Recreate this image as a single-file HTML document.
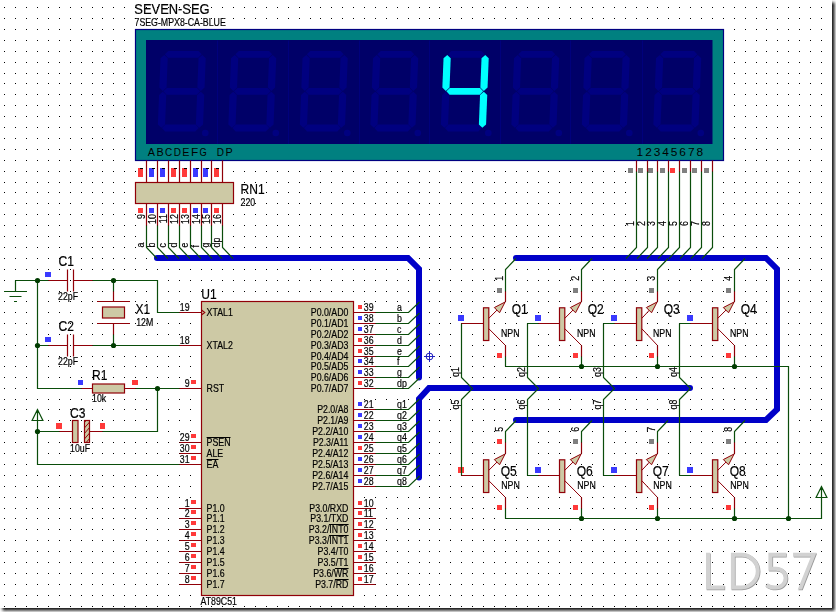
<!DOCTYPE html>
<html><head><meta charset="utf-8"><title>LD57 schematic</title>
<style>
html,body{margin:0;padding:0;background:#fff;}
body{width:836px;height:612px;overflow:hidden;position:relative;font-family:"Liberation Sans",sans-serif;}
#sheet{position:absolute;left:0;top:0;width:832px;height:608px;background:#fff;box-shadow:2px 2px 3px 0.5px rgba(0,0,0,0.95);}
svg{display:block;}
text{white-space:pre;}
</style></head><body>
<div id="sheet">
<svg width="832" height="608" viewBox="0 0 832 608" font-family="'Liberation Sans', sans-serif" fill="#000">
<defs><path id="r" d="M4 0h1v1h-1zM15 0h1v1h-1zM26 0h1v1h-1zM37 0h1v1h-1zM48 0h1v1h-1zM59 0h1v1h-1zM70 0h1v1h-1zM81 0h1v1h-1zM92 0h1v1h-1zM102 0h1v1h-1zM113 0h1v1h-1zM124 0h1v1h-1zM135 0h1v1h-1zM146 0h1v1h-1zM157 0h1v1h-1zM168 0h1v1h-1zM179 0h1v1h-1zM190 0h1v1h-1zM201 0h1v1h-1zM211 0h1v1h-1zM222 0h1v1h-1zM233 0h1v1h-1zM244 0h1v1h-1zM255 0h1v1h-1zM266 0h1v1h-1zM277 0h1v1h-1zM288 0h1v1h-1zM299 0h1v1h-1zM310 0h1v1h-1zM320 0h1v1h-1zM331 0h1v1h-1zM342 0h1v1h-1zM353 0h1v1h-1zM364 0h1v1h-1zM375 0h1v1h-1zM386 0h1v1h-1zM397 0h1v1h-1zM408 0h1v1h-1zM419 0h1v1h-1zM429 0h1v1h-1zM439 0h1v1h-1zM450 0h1v1h-1zM461 0h1v1h-1zM472 0h1v1h-1zM483 0h1v1h-1zM494 0h1v1h-1zM505 0h1v1h-1zM516 0h1v1h-1zM527 0h1v1h-1zM538 0h1v1h-1zM548 0h1v1h-1zM559 0h1v1h-1zM570 0h1v1h-1zM581 0h1v1h-1zM592 0h1v1h-1zM603 0h1v1h-1zM614 0h1v1h-1zM625 0h1v1h-1zM636 0h1v1h-1zM647 0h1v1h-1zM657 0h1v1h-1zM668 0h1v1h-1zM679 0h1v1h-1zM690 0h1v1h-1zM701 0h1v1h-1zM712 0h1v1h-1zM723 0h1v1h-1zM734 0h1v1h-1zM745 0h1v1h-1zM756 0h1v1h-1zM766 0h1v1h-1zM777 0h1v1h-1zM788 0h1v1h-1zM799 0h1v1h-1zM810 0h1v1h-1zM821 0h1v1h-1z"/></defs>
<g fill="#000" shape-rendering="crispEdges">
<use href="#r" y="7"/>
<use href="#r" y="18"/>
<use href="#r" y="29"/>
<use href="#r" y="40"/>
<use href="#r" y="51"/>
<use href="#r" y="62"/>
<use href="#r" y="73"/>
<use href="#r" y="83"/>
<use href="#r" y="94"/>
<use href="#r" y="105"/>
<use href="#r" y="116"/>
<use href="#r" y="127"/>
<use href="#r" y="138"/>
<use href="#r" y="149"/>
<use href="#r" y="160"/>
<use href="#r" y="171"/>
<use href="#r" y="182"/>
<use href="#r" y="192"/>
<use href="#r" y="203"/>
<use href="#r" y="214"/>
<use href="#r" y="225"/>
<use href="#r" y="236"/>
<use href="#r" y="247"/>
<use href="#r" y="258"/>
<use href="#r" y="269"/>
<use href="#r" y="280"/>
<use href="#r" y="291"/>
<use href="#r" y="301"/>
<use href="#r" y="312"/>
<use href="#r" y="323"/>
<use href="#r" y="334"/>
<use href="#r" y="345"/>
<use href="#r" y="356"/>
<use href="#r" y="366"/>
<use href="#r" y="377"/>
<use href="#r" y="388"/>
<use href="#r" y="399"/>
<use href="#r" y="409"/>
<use href="#r" y="420"/>
<use href="#r" y="431"/>
<use href="#r" y="442"/>
<use href="#r" y="453"/>
<use href="#r" y="464"/>
<use href="#r" y="475"/>
<use href="#r" y="486"/>
<use href="#r" y="497"/>
<use href="#r" y="508"/>
<use href="#r" y="518"/>
<use href="#r" y="529"/>
<use href="#r" y="540"/>
<use href="#r" y="551"/>
<use href="#r" y="562"/>
<use href="#r" y="573"/>
<use href="#r" y="584"/>
<use href="#r" y="595"/>
<use href="#r" y="606"/>
</g>
<g fill="none" stroke-width="4" stroke-linejoin="miter" stroke-linecap="butt"><path d="M708 552.7V587.6H724.5M732.9 554.7H741.4A16.4 16.4 0 0 1 741.4 587.5H732.9ZM786 554.7H770.4V568.7H776C782.5 568.7 785.6 573.4 785.6 578C785.6 583.6 781.4 587.6 775.2 587.6C771.6 587.6 768.6 586.6 766.4 584.7" stroke="#9a9a9a" transform="translate(0.7 0.7)"/><polygon points="793.1,552.7 816.4,552.7 802,589.5 797.7,589.5 810.9,556.7 793.1,556.7" fill="#9a9a9a" transform="translate(0.7 0.7)"/><path d="M708 552.7V587.6H724.5M732.9 554.7H741.4A16.4 16.4 0 0 1 741.4 587.5H732.9ZM786 554.7H770.4V568.7H776C782.5 568.7 785.6 573.4 785.6 578C785.6 583.6 781.4 587.6 775.2 587.6C771.6 587.6 768.6 586.6 766.4 584.7" stroke="#d2d2d2"/><polygon points="793.1,552.7 816.4,552.7 802,589.5 797.7,589.5 810.9,556.7 793.1,556.7" fill="#d2d2d2"/></g>
<g><rect x="135.5" y="29.5" width="588" height="131" fill="#008080" stroke="#000080" stroke-width="1.2"/><rect x="146" y="40" width="566.5" height="104" fill="#000068"/><rect x="217" y="40.5" width="1" height="103.5" fill="#00007c"/><rect x="288" y="40.5" width="1" height="103.5" fill="#00007c"/><rect x="359" y="40.5" width="1" height="103.5" fill="#00007c"/><rect x="429" y="40.5" width="1" height="103.5" fill="#00007c"/><rect x="500" y="40.5" width="1" height="103.5" fill="#00007c"/><rect x="570" y="40.5" width="1" height="103.5" fill="#00007c"/><rect x="642" y="40.5" width="1" height="103.5" fill="#00007c"/><polygon points="164.88,54.3 168.32,50.9 198.52,50.9 201.68,54.3 198.24,57.7 168.04,57.7" fill="#000080"/><polygon points="161.93,128 165.37,124.6 195.57,124.6 198.73,128 195.3,131.4 165.1,131.4" fill="#000080"/><polygon points="162.78,91.7 166.25,95 165.07,124.5 161.34,127.8 157.87,124.5 159.05,95" fill="#000080"/><polygon points="164.26,54.9 167.72,58.2 166.55,87.6 162.82,90.9 159.35,87.6 160.52,58.2" fill="#000080"/><polygon points="202.26,54.9 205.72,58.2 204.55,87.6 200.82,90.9 197.35,87.6 198.52,58.2" fill="#000080"/><polygon points="200.78,91.7 204.25,95 203.07,124.5 199.34,127.8 195.87,124.5 197.05,95" fill="#000080"/><polygon points="163.4,91.3 166.84,87.9 197.04,87.9 200.2,91.3 196.76,94.7 166.56,94.7" fill="#000080"/><circle cx="205.3" cy="133" r="3.3" fill="#000080"/><polygon points="235.38,54.3 238.82,50.9 269.02,50.9 272.18,54.3 268.74,57.7 238.54,57.7" fill="#000080"/><polygon points="232.43,128 235.87,124.6 266.07,124.6 269.23,128 265.8,131.4 235.6,131.4" fill="#000080"/><polygon points="233.28,91.7 236.75,95 235.57,124.5 231.84,127.8 228.37,124.5 229.55,95" fill="#000080"/><polygon points="234.76,54.9 238.22,58.2 237.05,87.6 233.32,90.9 229.85,87.6 231.02,58.2" fill="#000080"/><polygon points="272.76,54.9 276.22,58.2 275.05,87.6 271.32,90.9 267.85,87.6 269.02,58.2" fill="#000080"/><polygon points="271.28,91.7 274.75,95 273.57,124.5 269.84,127.8 266.37,124.5 267.55,95" fill="#000080"/><polygon points="233.9,91.3 237.34,87.9 267.54,87.9 270.7,91.3 267.26,94.7 237.06,94.7" fill="#000080"/><circle cx="275.8" cy="133" r="3.3" fill="#000080"/><polygon points="306.88,54.3 310.32,50.9 340.52,50.9 343.68,54.3 340.24,57.7 310.04,57.7" fill="#000080"/><polygon points="303.93,128 307.37,124.6 337.57,124.6 340.73,128 337.3,131.4 307.1,131.4" fill="#000080"/><polygon points="304.78,91.7 308.25,95 307.07,124.5 303.34,127.8 299.87,124.5 301.05,95" fill="#000080"/><polygon points="306.26,54.9 309.72,58.2 308.55,87.6 304.82,90.9 301.35,87.6 302.52,58.2" fill="#000080"/><polygon points="344.26,54.9 347.72,58.2 346.55,87.6 342.82,90.9 339.35,87.6 340.52,58.2" fill="#000080"/><polygon points="342.78,91.7 346.25,95 345.07,124.5 341.34,127.8 337.87,124.5 339.05,95" fill="#000080"/><polygon points="305.4,91.3 308.84,87.9 339.04,87.9 342.2,91.3 338.76,94.7 308.56,94.7" fill="#000080"/><circle cx="347.3" cy="133" r="3.3" fill="#000080"/><polygon points="377.38,54.3 380.82,50.9 411.02,50.9 414.18,54.3 410.74,57.7 380.54,57.7" fill="#000080"/><polygon points="374.43,128 377.87,124.6 408.07,124.6 411.23,128 407.8,131.4 377.6,131.4" fill="#000080"/><polygon points="375.28,91.7 378.75,95 377.57,124.5 373.84,127.8 370.37,124.5 371.55,95" fill="#000080"/><polygon points="376.76,54.9 380.22,58.2 379.05,87.6 375.32,90.9 371.85,87.6 373.02,58.2" fill="#000080"/><polygon points="414.76,54.9 418.22,58.2 417.05,87.6 413.32,90.9 409.85,87.6 411.02,58.2" fill="#000080"/><polygon points="413.28,91.7 416.75,95 415.57,124.5 411.84,127.8 408.37,124.5 409.55,95" fill="#000080"/><polygon points="375.9,91.3 379.34,87.9 409.54,87.9 412.7,91.3 409.26,94.7 379.06,94.7" fill="#000080"/><circle cx="417.8" cy="133" r="3.3" fill="#000080"/><polygon points="447.88,54.3 451.32,50.9 481.52,50.9 484.68,54.3 481.24,57.7 451.04,57.7" fill="#000080"/><polygon points="444.93,128 448.37,124.6 478.57,124.6 481.73,128 478.3,131.4 448.1,131.4" fill="#000080"/><polygon points="445.78,91.7 449.25,95 448.07,124.5 444.34,127.8 440.87,124.5 442.05,95" fill="#000080"/><polygon points="447.26,54.9 450.72,58.2 449.55,87.6 445.82,90.9 442.35,87.6 443.52,58.2" fill="#00ffff"/><polygon points="485.26,54.9 488.72,58.2 487.55,87.6 483.82,90.9 480.35,87.6 481.52,58.2" fill="#00ffff"/><polygon points="483.78,91.7 487.25,95 486.07,124.5 482.34,127.8 478.87,124.5 480.05,95" fill="#00ffff"/><polygon points="446.4,91.3 449.84,87.9 480.04,87.9 483.2,91.3 479.76,94.7 449.56,94.7" fill="#00ffff"/><circle cx="488.3" cy="133" r="3.3" fill="#000080"/><polygon points="518.38,54.3 521.82,50.9 552.02,50.9 555.18,54.3 551.74,57.7 521.54,57.7" fill="#000080"/><polygon points="515.43,128 518.87,124.6 549.07,124.6 552.23,128 548.8,131.4 518.6,131.4" fill="#000080"/><polygon points="516.28,91.7 519.75,95 518.57,124.5 514.84,127.8 511.37,124.5 512.55,95" fill="#000080"/><polygon points="517.76,54.9 521.22,58.2 520.05,87.6 516.32,90.9 512.85,87.6 514.02,58.2" fill="#000080"/><polygon points="555.76,54.9 559.22,58.2 558.05,87.6 554.32,90.9 550.85,87.6 552.02,58.2" fill="#000080"/><polygon points="554.28,91.7 557.75,95 556.57,124.5 552.84,127.8 549.37,124.5 550.55,95" fill="#000080"/><polygon points="516.9,91.3 520.34,87.9 550.54,87.9 553.7,91.3 550.26,94.7 520.06,94.7" fill="#000080"/><circle cx="558.8" cy="133" r="3.3" fill="#000080"/><polygon points="588.88,54.3 592.32,50.9 622.52,50.9 625.68,54.3 622.24,57.7 592.04,57.7" fill="#000080"/><polygon points="585.93,128 589.37,124.6 619.57,124.6 622.73,128 619.3,131.4 589.1,131.4" fill="#000080"/><polygon points="586.78,91.7 590.25,95 589.07,124.5 585.34,127.8 581.87,124.5 583.05,95" fill="#000080"/><polygon points="588.26,54.9 591.72,58.2 590.55,87.6 586.82,90.9 583.35,87.6 584.52,58.2" fill="#000080"/><polygon points="626.26,54.9 629.72,58.2 628.55,87.6 624.82,90.9 621.35,87.6 622.52,58.2" fill="#000080"/><polygon points="624.78,91.7 628.25,95 627.07,124.5 623.34,127.8 619.87,124.5 621.05,95" fill="#000080"/><polygon points="587.4,91.3 590.84,87.9 621.04,87.9 624.2,91.3 620.76,94.7 590.56,94.7" fill="#000080"/><circle cx="629.3" cy="133" r="3.3" fill="#000080"/><polygon points="660.38,54.3 663.82,50.9 694.02,50.9 697.18,54.3 693.74,57.7 663.54,57.7" fill="#000080"/><polygon points="657.43,128 660.87,124.6 691.07,124.6 694.23,128 690.8,131.4 660.6,131.4" fill="#000080"/><polygon points="658.28,91.7 661.75,95 660.57,124.5 656.84,127.8 653.37,124.5 654.55,95" fill="#000080"/><polygon points="659.76,54.9 663.22,58.2 662.05,87.6 658.32,90.9 654.85,87.6 656.02,58.2" fill="#000080"/><polygon points="697.76,54.9 701.22,58.2 700.05,87.6 696.32,90.9 692.85,87.6 694.02,58.2" fill="#000080"/><polygon points="696.28,91.7 699.75,95 698.57,124.5 694.84,127.8 691.37,124.5 692.55,95" fill="#000080"/><polygon points="658.9,91.3 662.34,87.9 692.54,87.9 695.7,91.3 692.26,94.7 662.06,94.7" fill="#000080"/><circle cx="700.8" cy="133" r="3.3" fill="#000080"/><text x="147.8" y="156" font-size="10" textLength="7.2" lengthAdjust="spacingAndGlyphs">A</text><text x="156.43" y="156" font-size="10" textLength="7.2" lengthAdjust="spacingAndGlyphs">B</text><text x="165.06" y="156" font-size="10" textLength="7.2" lengthAdjust="spacingAndGlyphs">C</text><text x="173.69" y="156" font-size="10" textLength="7.2" lengthAdjust="spacingAndGlyphs">D</text><text x="182.32" y="156" font-size="10" textLength="7.2" lengthAdjust="spacingAndGlyphs">E</text><text x="190.95" y="156" font-size="10" textLength="7.2" lengthAdjust="spacingAndGlyphs">F</text><text x="199.58" y="156" font-size="10" textLength="7.2" lengthAdjust="spacingAndGlyphs">G</text><text x="216.84" y="156" font-size="10" textLength="7.2" lengthAdjust="spacingAndGlyphs">D</text><text x="225.47" y="156" font-size="10" textLength="7.2" lengthAdjust="spacingAndGlyphs">P</text><text x="636.6" y="156" font-size="10" textLength="6.6" lengthAdjust="spacingAndGlyphs">1</text><text x="645.15" y="156" font-size="10" textLength="6.6" lengthAdjust="spacingAndGlyphs">2</text><text x="653.7" y="156" font-size="10" textLength="6.6" lengthAdjust="spacingAndGlyphs">3</text><text x="662.25" y="156" font-size="10" textLength="6.6" lengthAdjust="spacingAndGlyphs">4</text><text x="670.8" y="156" font-size="10" textLength="6.6" lengthAdjust="spacingAndGlyphs">5</text><text x="679.35" y="156" font-size="10" textLength="6.6" lengthAdjust="spacingAndGlyphs">6</text><text x="687.9" y="156" font-size="10" textLength="6.6" lengthAdjust="spacingAndGlyphs">7</text><text x="696.45" y="156" font-size="10" textLength="6.6" lengthAdjust="spacingAndGlyphs">8</text></g>
<g fill="#cdc9a5" stroke="#900008" stroke-width="1.2"><rect x="135.5" y="182.5" width="98" height="21"/><rect x="201.5" y="301.5" width="152" height="294"/><rect x="102.5" y="307" width="22" height="11"/><rect x="92.5" y="384" width="32" height="9"/><rect x="72.5" y="420.5" width="5.5" height="22"/><rect x="483.5" y="307.8" width="5.3" height="32.7"/><rect x="483.5" y="459.8" width="5.3" height="32.7"/><rect x="559.5" y="307.8" width="5.3" height="32.7"/><rect x="559.5" y="459.8" width="5.3" height="32.7"/><rect x="636.5" y="307.8" width="5.3" height="32.7"/><rect x="636.5" y="459.8" width="5.3" height="32.7"/><rect x="712.5" y="307.8" width="5.3" height="32.7"/><rect x="712.5" y="459.8" width="5.3" height="32.7"/></g>
<clipPath id="hc"><rect x="84.5" y="420.5" width="5" height="22"/></clipPath>
<rect x="84.5" y="420.5" width="5" height="22" fill="#cdc9a5"/>
<path d="M83.5 423.5L90.5 415.5M83.5 429L90.5 421M83.5 434.5L90.5 426.5M83.5 440L90.5 432M83.5 445.5L90.5 437.5" stroke="#900008" stroke-width="1" fill="none" clip-path="url(#hc)"/>
<rect x="84.5" y="420.5" width="5" height="22" fill="none" stroke="#900008" stroke-width="1.2"/>
<g shape-rendering="crispEdges"><rect x="138" y="168" width="5" height="9" fill="#ff3a3a"/><rect x="140" y="167.5" width="3" height="1" fill="#000"/><rect x="138" y="208" width="5" height="5" fill="#ff3a3a"/><rect x="149" y="168" width="5" height="9" fill="#3a3aff"/><rect x="152" y="167.5" width="3" height="1" fill="#000"/><rect x="149" y="208" width="5" height="5" fill="#3a3aff"/><rect x="160" y="168" width="5" height="9" fill="#3a3aff"/><rect x="162" y="167.5" width="3" height="1" fill="#000"/><rect x="160" y="208" width="5" height="5" fill="#3a3aff"/><rect x="171" y="168" width="5" height="9" fill="#ff3a3a"/><rect x="174" y="167.5" width="3" height="1" fill="#000"/><rect x="171" y="208" width="5" height="5" fill="#ff3a3a"/><rect x="182" y="168" width="5" height="9" fill="#ff3a3a"/><rect x="184" y="167.5" width="3" height="1" fill="#000"/><rect x="182" y="208" width="5" height="5" fill="#ff3a3a"/><rect x="193" y="168" width="5" height="9" fill="#3a3aff"/><rect x="196" y="167.5" width="3" height="1" fill="#000"/><rect x="193" y="208" width="5" height="5" fill="#3a3aff"/><rect x="203" y="168" width="5" height="9" fill="#3a3aff"/><rect x="206" y="167.5" width="3" height="1" fill="#000"/><rect x="203" y="208" width="5" height="5" fill="#3a3aff"/><rect x="214" y="168" width="5" height="9" fill="#ff3a3a"/><rect x="216" y="167.5" width="3" height="1" fill="#000"/><rect x="214" y="208" width="5" height="5" fill="#ff3a3a"/><rect x="628" y="168" width="5" height="5" fill="#808080"/><rect x="638" y="168" width="5" height="5" fill="#808080"/><rect x="648" y="168" width="5" height="5" fill="#808080"/><rect x="660" y="168" width="5" height="5" fill="#808080"/><rect x="670" y="168" width="5" height="5" fill="#ff3a3a"/><rect x="682" y="168" width="5" height="5" fill="#808080"/><rect x="692" y="168" width="5" height="5" fill="#808080"/><rect x="704" y="168" width="5" height="5" fill="#808080"/><rect x="191" y="380" width="5" height="4" fill="#ff3a3a"/><rect x="191" y="434" width="5" height="4" fill="#ff3a3a"/><rect x="191" y="445" width="5" height="4" fill="#ff3a3a"/><rect x="191" y="456" width="5" height="4" fill="#ff3a3a"/><rect x="191" y="500" width="5" height="4" fill="#ff3a3a"/><rect x="191" y="510" width="5" height="4" fill="#ff3a3a"/><rect x="191" y="521" width="5" height="4" fill="#ff3a3a"/><rect x="191" y="532" width="5" height="4" fill="#ff3a3a"/><rect x="191" y="543" width="5" height="4" fill="#ff3a3a"/><rect x="191" y="554" width="5" height="4" fill="#ff3a3a"/><rect x="191" y="565" width="5" height="4" fill="#ff3a3a"/><rect x="191" y="576" width="5" height="4" fill="#ff3a3a"/><rect x="358" y="305" width="4" height="4" fill="#ff3a3a"/><rect x="358" y="402" width="4" height="4" fill="#3a3aff"/><rect x="358" y="501" width="4" height="4" fill="#ff3a3a"/><rect x="358" y="316" width="4" height="4" fill="#3a3aff"/><rect x="358" y="413" width="4" height="4" fill="#3a3aff"/><rect x="358" y="511" width="4" height="4" fill="#ff3a3a"/><rect x="358" y="327" width="4" height="4" fill="#3a3aff"/><rect x="358" y="424" width="4" height="4" fill="#3a3aff"/><rect x="358" y="522" width="4" height="4" fill="#ff3a3a"/><rect x="358" y="338" width="4" height="4" fill="#ff3a3a"/><rect x="358" y="435" width="4" height="4" fill="#3a3aff"/><rect x="358" y="533" width="4" height="4" fill="#ff3a3a"/><rect x="358" y="349" width="4" height="4" fill="#ff3a3a"/><rect x="358" y="446" width="4" height="4" fill="#ff3a3a"/><rect x="358" y="544" width="4" height="4" fill="#ff3a3a"/><rect x="358" y="359" width="4" height="4" fill="#3a3aff"/><rect x="358" y="457" width="4" height="4" fill="#3a3aff"/><rect x="358" y="555" width="4" height="4" fill="#ff3a3a"/><rect x="358" y="370" width="4" height="4" fill="#3a3aff"/><rect x="358" y="468" width="4" height="4" fill="#3a3aff"/><rect x="358" y="566" width="4" height="4" fill="#ff3a3a"/><rect x="358" y="381" width="4" height="4" fill="#ff3a3a"/><rect x="358" y="479" width="4" height="4" fill="#3a3aff"/><rect x="358" y="577" width="4" height="4" fill="#ff3a3a"/><rect x="45" y="272" width="6" height="5" fill="#3a3aff"/><rect x="45" y="337" width="6" height="5" fill="#3a3aff"/><rect x="78" y="380" width="5" height="5" fill="#3a3aff"/><rect x="132" y="380" width="6" height="5" fill="#ff3a3a"/><rect x="56" y="423" width="6" height="6" fill="#ff3a3a"/><rect x="100" y="423" width="5" height="6" fill="#ff3a3a"/><rect x="497" y="288" width="5" height="5" fill="#808080"/><rect x="497" y="353" width="5" height="5" fill="#ff3a3a"/><rect x="458" y="315" width="6" height="6" fill="#3a3aff"/><rect x="497" y="439" width="5" height="5" fill="#ff3a3a"/><rect x="497" y="505" width="5" height="5" fill="#ff3a3a"/><rect x="458" y="467" width="6" height="6" fill="#ff3a3a"/><rect x="573" y="288" width="5" height="5" fill="#808080"/><rect x="573" y="353" width="5" height="5" fill="#ff3a3a"/><rect x="535" y="315" width="6" height="6" fill="#3a3aff"/><rect x="573" y="439" width="5" height="5" fill="#808080"/><rect x="573" y="505" width="5" height="5" fill="#ff3a3a"/><rect x="535" y="467" width="6" height="6" fill="#3a3aff"/><rect x="649" y="288" width="5" height="5" fill="#808080"/><rect x="649" y="353" width="5" height="5" fill="#ff3a3a"/><rect x="611" y="315" width="6" height="6" fill="#3a3aff"/><rect x="649" y="439" width="5" height="5" fill="#808080"/><rect x="649" y="505" width="5" height="5" fill="#ff3a3a"/><rect x="611" y="467" width="6" height="6" fill="#3a3aff"/><rect x="726" y="288" width="5" height="5" fill="#808080"/><rect x="726" y="353" width="5" height="5" fill="#ff3a3a"/><rect x="687" y="315" width="6" height="6" fill="#3a3aff"/><rect x="726" y="439" width="5" height="5" fill="#808080"/><rect x="726" y="505" width="5" height="5" fill="#ff3a3a"/><rect x="687" y="467" width="6" height="6" fill="#3a3aff"/></g>
<path d="M157.5 258H408.5L419.5 269V377.5M690.5 388H429.5L419.5 399V477.5M516.5 258H766.5L777.5 269V409.5L766.5 420H516.5" fill="none" stroke="#0000c8" stroke-width="6" stroke-linecap="round" stroke-linejoin="miter" transform="translate(-0.5 0)"/>
<path d="M146.5 225.5V247.5L157 258.5M157.5 225.5V247.5L168 258.5M168.5 225.5V247.5L179 258.5M179.5 225.5V247.5L190 258.5M190.5 225.5V247.5L201 258.5M201.5 225.5V247.5L212 258.5M211.5 225.5V247.5L222 258.5M222.5 225.5V247.5L233 258.5M636.5 171.5V247.5L626 258.5M647.5 171.5V247.5L637 258.5M657.5 171.5V247.5L647 258.5M668.5 171.5V247.5L658 258.5M679.5 171.5V247.5L669 258.5M690.5 171.5V247.5L680 258.5M701.5 171.5V247.5L691 258.5M712.5 171.5V247.5L702 258.5M375.5 312.5H408.5L419.5 302M375.5 409.5H408.5L419.5 399M375.5 323.5H408.5L419.5 313M375.5 420.5H408.5L419.5 410M375.5 334.5H408.5L419.5 324M375.5 431.5H408.5L419.5 421M375.5 345.5H408.5L419.5 335M375.5 442.5H408.5L419.5 432M375.5 356.5H408.5L419.5 346M375.5 453.5H408.5L419.5 443M375.5 366.5H408.5L419.5 356M375.5 464.5H408.5L419.5 454M375.5 377.5H408.5L419.5 367M375.5 475.5H408.5L419.5 465M375.5 388.5H408.5L419.5 378M375.5 486.5H408.5L419.5 476M15.5 280.5H37.5M15.5 280.5V291.5M4 291.5H27M9.5 296.5H21.5M14 301.5H17M37.5 280.5V388.5H81.5M37.5 280.5H48.5M37.5 345.5H48.5M92.5 280.5H157.5V312.5H179.5M92.5 345.5H179.5M113.5 280.5V291.5M113.5 334.5V345.5M135.5 388.5H179.5M157.5 388.5V431.5H102.5M37.5 431.5H59.5M37.5 409.5V464.5H179.5M37.5 409.5L32.1 420.5H42.9ZM505.5 291.5V269.5L516 258.5M505.5 356.5V366.5M505.5 442.5V431.5L516 420.5M505.5 508.5V518.5M461.5 323.5V377.5L472.5 388.5L461.5 399.5V475.5M581.5 291.5V269.5L592 258.5M581.5 356.5V366.5M527.5 323.5H538.5M581.5 442.5V431.5L592 420.5M581.5 508.5V518.5M527.5 475.5H538.5M527.5 323.5V377.5L538.5 388.5L527.5 399.5V475.5M657.5 291.5V269.5L668 258.5M657.5 356.5V366.5M603.5 323.5H614.5M657.5 442.5V431.5L668 420.5M657.5 508.5V518.5M603.5 475.5H614.5M603.5 323.5V377.5L614.5 388.5L603.5 399.5V475.5M734.5 291.5V269.5L745 258.5M734.5 356.5V366.5M679.5 323.5H690.5M734.5 442.5V431.5L745 420.5M734.5 508.5V518.5M679.5 475.5H690.5M679.5 323.5V377.5L690.5 388.5L679.5 399.5V475.5M505.5 366.5H788.5V518.5M505.5 518.5H821.5V486.5M821.5 486.5L816.1 497.5H826.9Z" fill="none" stroke="#0a4d0a" stroke-width="1.2"/>
<path d="M146.5 160.5V182.5M146.5 203.5V225.5M157.5 160.5V182.5M157.5 203.5V225.5M168.5 160.5V182.5M168.5 203.5V225.5M179.5 160.5V182.5M179.5 203.5V225.5M190.5 160.5V182.5M190.5 203.5V225.5M201.5 160.5V182.5M201.5 203.5V225.5M211.5 160.5V182.5M211.5 203.5V225.5M222.5 160.5V182.5M222.5 203.5V225.5M636.5 160.5V171.5M647.5 160.5V171.5M657.5 160.5V171.5M668.5 160.5V171.5M679.5 160.5V171.5M690.5 160.5V171.5M701.5 160.5V171.5M712.5 160.5V171.5M179.5 312.5H201.5M179.5 345.5H201.5M179.5 388.5H201.5M179.5 442.5H201.5M179.5 453.5H201.5M179.5 464.5H201.5M179.5 508.5H201.5M179.5 518.5H201.5M179.5 529.5H201.5M179.5 540.5H201.5M179.5 551.5H201.5M179.5 562.5H201.5M179.5 573.5H201.5M179.5 584.5H201.5M201.5 310L204.7 312.5L201.5 315M353.5 312.5H375.5M353.5 409.5H375.5M353.5 508.5H375.5M353.5 323.5H375.5M353.5 420.5H375.5M353.5 518.5H375.5M353.5 334.5H375.5M353.5 431.5H375.5M353.5 529.5H375.5M353.5 345.5H375.5M353.5 442.5H375.5M353.5 540.5H375.5M353.5 356.5H375.5M353.5 453.5H375.5M353.5 551.5H375.5M353.5 366.5H375.5M353.5 464.5H375.5M353.5 562.5H375.5M353.5 377.5H375.5M353.5 475.5H375.5M353.5 573.5H375.5M353.5 388.5H375.5M353.5 486.5H375.5M353.5 584.5H375.5M48.5 280.5H67.5M73.5 280.5H92.5M67.5 269.5V291.5M73.5 269.5V291.5M48.5 345.5H67.5M73.5 345.5H92.5M67.5 334.5V356.5M73.5 334.5V356.5M113.5 291.5V301.5M97 301.5H130M97 323.5H130M113.5 323.5V334.5M81.5 388.5H92.5M124.5 388.5H135.5M89.5 431.5H102.5M59.5 431.5H72.5M505.5 301.5V291.5M505.5 345.5V356.5M461.5 323.5H483.5M505.5 453.5V442.5M505.5 497.5V508.5M461.5 475.5H483.5M581.5 301.5V291.5M581.5 345.5V356.5M538.5 323.5H559.5M581.5 453.5V442.5M581.5 497.5V508.5M538.5 475.5H559.5M657.5 301.5V291.5M657.5 345.5V356.5M614.5 323.5H636.5M657.5 453.5V442.5M657.5 497.5V508.5M614.5 475.5H636.5M734.5 301.5V291.5M734.5 345.5V356.5M690.5 323.5H712.5M734.5 453.5V442.5M734.5 497.5V508.5M690.5 475.5H712.5" fill="none" stroke="#900008" stroke-width="1.2"/>
<path d="M488.8 318.3L505.5 301.5M488.8 328.7L505.5 345.5M488.8 470.3L505.5 453.5M488.8 480.7L505.5 497.5M564.8 318.3L581.5 301.5M564.8 328.7L581.5 345.5M564.8 470.3L581.5 453.5M564.8 480.7L581.5 497.5M641.8 318.3L657.5 301.5M641.8 328.7L657.5 345.5M641.8 470.3L657.5 453.5M641.8 480.7L657.5 497.5M717.8 318.3L734.5 301.5M717.8 328.7L734.5 345.5M717.8 470.3L734.5 453.5M717.8 480.7L734.5 497.5" fill="none" stroke="#900008" stroke-width="1"/>
<g fill="#cdc9a5" stroke="#900008" stroke-width="1"><polygon points="505.1,302 494.35,307.55 499.55,312.75"/><polygon points="505.1,454 494.35,459.55 499.55,464.75"/><polygon points="581.1,302 570.35,307.55 575.55,312.75"/><polygon points="581.1,454 570.35,459.55 575.55,464.75"/><polygon points="657.1,302 646.35,307.55 651.55,312.75"/><polygon points="657.1,454 646.35,459.55 651.55,464.75"/><polygon points="734.1,302 723.35,307.55 728.55,312.75"/><polygon points="734.1,454 723.35,459.55 728.55,464.75"/></g>
<g fill="#003c00"><circle cx="37.5" cy="280.5" r="2.6"/><circle cx="37.5" cy="345.5" r="2.6"/><circle cx="113.5" cy="280.5" r="2.6"/><circle cx="113.5" cy="345.5" r="2.6"/><circle cx="157.5" cy="388.5" r="2.6"/><circle cx="37.5" cy="431.5" r="2.6"/><circle cx="581.5" cy="366.5" r="2.6"/><circle cx="581.5" cy="518.5" r="2.6"/><circle cx="657.5" cy="366.5" r="2.6"/><circle cx="657.5" cy="518.5" r="2.6"/><circle cx="734.5" cy="366.5" r="2.6"/><circle cx="734.5" cy="518.5" r="2.6"/><circle cx="788.5" cy="518.5" r="2.6"/></g>
<g stroke="#2020c0" stroke-width="1" fill="none"><circle cx="429.5" cy="356.5" r="3.4"/><path d="M424 356.5H435M429.5 351V362"/></g>
<path d="M206.6 437.5H230.5M206.6 459.5H218.5M328.9 524.5H348.6M328.9 535.5H348.6M334.9 568.5H348.6M334.9 579.5H348.6" fill="none" stroke="#000" stroke-width="1"/>
<g opacity="0.999" stroke="#000" stroke-width="0.2"><text font-size="14.2" transform="translate(134.3 13.8) scale(0.91 1)">SEVEN-SEG</text><text font-size="10" transform="translate(134.5 25.8) scale(0.88 1)">7SEG-MPX8-CA-BLUE</text><text font-size="10" text-anchor="end" transform="translate(145 214.2) rotate(-90) scale(0.88 1)">9</text><text font-size="10" transform="translate(144.2 247.5) rotate(-90) scale(0.88 1)">a</text><text font-size="10" text-anchor="end" transform="translate(156 214.2) rotate(-90) scale(0.88 1)">10</text><text font-size="10" transform="translate(155.2 247.5) rotate(-90) scale(0.88 1)">b</text><text font-size="10" text-anchor="end" transform="translate(167 214.2) rotate(-90) scale(0.88 1)">11</text><text font-size="10" transform="translate(166.2 247.5) rotate(-90) scale(0.88 1)">c</text><text font-size="10" text-anchor="end" transform="translate(178 214.2) rotate(-90) scale(0.88 1)">12</text><text font-size="10" transform="translate(177.2 247.5) rotate(-90) scale(0.88 1)">d</text><text font-size="10" text-anchor="end" transform="translate(189 214.2) rotate(-90) scale(0.88 1)">13</text><text font-size="10" transform="translate(188.2 247.5) rotate(-90) scale(0.88 1)">e</text><text font-size="10" text-anchor="end" transform="translate(200 214.2) rotate(-90) scale(0.88 1)">14</text><text font-size="10" transform="translate(199.2 247.5) rotate(-90) scale(0.88 1)">f</text><text font-size="10" text-anchor="end" transform="translate(210 214.2) rotate(-90) scale(0.88 1)">15</text><text font-size="10" transform="translate(209.2 247.5) rotate(-90) scale(0.88 1)">g</text><text font-size="10" text-anchor="end" transform="translate(221 214.2) rotate(-90) scale(0.88 1)">16</text><text font-size="10" transform="translate(220.2 247.5) rotate(-90) scale(0.88 1)">dp</text><text font-size="14.2" transform="translate(240.5 193.8) scale(0.85 1)">RN1</text><text font-size="10" transform="translate(240.5 205.5) scale(0.88 1)">220</text><text font-size="10" transform="translate(634 226) rotate(-90) scale(0.88 1)">1</text><text font-size="10" transform="translate(645 226) rotate(-90) scale(0.88 1)">2</text><text font-size="10" transform="translate(655 226) rotate(-90) scale(0.88 1)">3</text><text font-size="10" transform="translate(666 226) rotate(-90) scale(0.88 1)">4</text><text font-size="10" transform="translate(677 226) rotate(-90) scale(0.88 1)">5</text><text font-size="10" transform="translate(688 226) rotate(-90) scale(0.88 1)">6</text><text font-size="10" transform="translate(699 226) rotate(-90) scale(0.88 1)">7</text><text font-size="10" transform="translate(710 226) rotate(-90) scale(0.88 1)">8</text><text font-size="14.2" transform="translate(201.2 298.8) scale(0.85 1)">U1</text><text font-size="10" transform="translate(200.5 604.8) scale(0.88 1)">AT89C51</text><text font-size="10" text-anchor="end" transform="translate(189.6 310.7) scale(0.88 1)">19</text><text font-size="10" transform="translate(206.6 315.8) scale(0.88 1)">XTAL1</text><text font-size="10" text-anchor="end" transform="translate(189.6 343.7) scale(0.88 1)">18</text><text font-size="10" transform="translate(206.6 348.8) scale(0.88 1)">XTAL2</text><text font-size="10" text-anchor="end" transform="translate(189.6 386.7) scale(0.88 1)">9</text><text font-size="10" transform="translate(206.6 391.8) scale(0.88 1)">RST</text><text font-size="10" text-anchor="end" transform="translate(189.6 440.7) scale(0.88 1)">29</text><text font-size="10" transform="translate(206.6 445.8) scale(0.88 1)">PSEN</text><text font-size="10" text-anchor="end" transform="translate(189.6 451.7) scale(0.88 1)">30</text><text font-size="10" transform="translate(206.6 456.8) scale(0.88 1)">ALE</text><text font-size="10" text-anchor="end" transform="translate(189.6 462.7) scale(0.88 1)">31</text><text font-size="10" transform="translate(206.6 467.8) scale(0.88 1)">EA</text><text font-size="10" text-anchor="end" transform="translate(189.6 506.7) scale(0.88 1)">1</text><text font-size="10" transform="translate(206.6 511.8) scale(0.88 1)">P1.0</text><text font-size="10" text-anchor="end" transform="translate(189.6 516.7) scale(0.88 1)">2</text><text font-size="10" transform="translate(206.6 521.8) scale(0.88 1)">P1.1</text><text font-size="10" text-anchor="end" transform="translate(189.6 527.7) scale(0.88 1)">3</text><text font-size="10" transform="translate(206.6 532.8) scale(0.88 1)">P1.2</text><text font-size="10" text-anchor="end" transform="translate(189.6 538.7) scale(0.88 1)">4</text><text font-size="10" transform="translate(206.6 543.8) scale(0.88 1)">P1.3</text><text font-size="10" text-anchor="end" transform="translate(189.6 549.7) scale(0.88 1)">5</text><text font-size="10" transform="translate(206.6 554.8) scale(0.88 1)">P1.4</text><text font-size="10" text-anchor="end" transform="translate(189.6 560.7) scale(0.88 1)">6</text><text font-size="10" transform="translate(206.6 565.8) scale(0.88 1)">P1.5</text><text font-size="10" text-anchor="end" transform="translate(189.6 571.7) scale(0.88 1)">7</text><text font-size="10" transform="translate(206.6 576.8) scale(0.88 1)">P1.6</text><text font-size="10" text-anchor="end" transform="translate(189.6 582.7) scale(0.88 1)">8</text><text font-size="10" transform="translate(206.6 587.8) scale(0.88 1)">P1.7</text><text font-size="10" transform="translate(363.8 310.7) scale(0.88 1)">39</text><text font-size="10" text-anchor="end" transform="translate(348.4 315.8) scale(0.88 1)">P0.0/AD0</text><text font-size="10" transform="translate(397 310.7) scale(0.88 1)">a</text><text font-size="10" transform="translate(363.8 407.7) scale(0.88 1)">21</text><text font-size="10" text-anchor="end" transform="translate(348.4 412.8) scale(0.88 1)">P2.0/A8</text><text font-size="10" transform="translate(397 407.7) scale(0.88 1)">q1</text><text font-size="10" transform="translate(363.8 506.7) scale(0.88 1)">10</text><text font-size="10" text-anchor="end" transform="translate(348.4 511.8) scale(0.88 1)">P3.0/RXD</text><text font-size="10" transform="translate(363.8 321.7) scale(0.88 1)">38</text><text font-size="10" text-anchor="end" transform="translate(348.4 326.8) scale(0.88 1)">P0.1/AD1</text><text font-size="10" transform="translate(397 321.7) scale(0.88 1)">b</text><text font-size="10" transform="translate(363.8 418.7) scale(0.88 1)">22</text><text font-size="10" text-anchor="end" transform="translate(348.4 423.8) scale(0.88 1)">P2.1/A9</text><text font-size="10" transform="translate(397 418.7) scale(0.88 1)">q2</text><text font-size="10" transform="translate(363.8 516.7) scale(0.88 1)">11</text><text font-size="10" text-anchor="end" transform="translate(348.4 521.8) scale(0.88 1)">P3.1/TXD</text><text font-size="10" transform="translate(363.8 332.7) scale(0.88 1)">37</text><text font-size="10" text-anchor="end" transform="translate(348.4 337.8) scale(0.88 1)">P0.2/AD2</text><text font-size="10" transform="translate(397 332.7) scale(0.88 1)">c</text><text font-size="10" transform="translate(363.8 429.7) scale(0.88 1)">23</text><text font-size="10" text-anchor="end" transform="translate(348.4 434.8) scale(0.88 1)">P2.2/A10</text><text font-size="10" transform="translate(397 429.7) scale(0.88 1)">q3</text><text font-size="10" transform="translate(363.8 527.7) scale(0.88 1)">12</text><text font-size="10" text-anchor="end" transform="translate(348.4 532.8) scale(0.88 1)">P3.2/INT0</text><text font-size="10" transform="translate(363.8 343.7) scale(0.88 1)">36</text><text font-size="10" text-anchor="end" transform="translate(348.4 348.8) scale(0.88 1)">P0.3/AD3</text><text font-size="10" transform="translate(397 343.7) scale(0.88 1)">d</text><text font-size="10" transform="translate(363.8 440.7) scale(0.88 1)">24</text><text font-size="10" text-anchor="end" transform="translate(348.4 445.8) scale(0.88 1)">P2.3/A11</text><text font-size="10" transform="translate(397 440.7) scale(0.88 1)">q4</text><text font-size="10" transform="translate(363.8 538.7) scale(0.88 1)">13</text><text font-size="10" text-anchor="end" transform="translate(348.4 543.8) scale(0.88 1)">P3.3/INT1</text><text font-size="10" transform="translate(363.8 354.7) scale(0.88 1)">35</text><text font-size="10" text-anchor="end" transform="translate(348.4 359.8) scale(0.88 1)">P0.4/AD4</text><text font-size="10" transform="translate(397 354.7) scale(0.88 1)">e</text><text font-size="10" transform="translate(363.8 451.7) scale(0.88 1)">25</text><text font-size="10" text-anchor="end" transform="translate(348.4 456.8) scale(0.88 1)">P2.4/A12</text><text font-size="10" transform="translate(397 451.7) scale(0.88 1)">q5</text><text font-size="10" transform="translate(363.8 549.7) scale(0.88 1)">14</text><text font-size="10" text-anchor="end" transform="translate(348.4 554.8) scale(0.88 1)">P3.4/T0</text><text font-size="10" transform="translate(363.8 364.7) scale(0.88 1)">34</text><text font-size="10" text-anchor="end" transform="translate(348.4 369.8) scale(0.88 1)">P0.5/AD5</text><text font-size="10" transform="translate(397 364.7) scale(0.88 1)">f</text><text font-size="10" transform="translate(363.8 462.7) scale(0.88 1)">26</text><text font-size="10" text-anchor="end" transform="translate(348.4 467.8) scale(0.88 1)">P2.5/A13</text><text font-size="10" transform="translate(397 462.7) scale(0.88 1)">q6</text><text font-size="10" transform="translate(363.8 560.7) scale(0.88 1)">15</text><text font-size="10" text-anchor="end" transform="translate(348.4 565.8) scale(0.88 1)">P3.5/T1</text><text font-size="10" transform="translate(363.8 375.7) scale(0.88 1)">33</text><text font-size="10" text-anchor="end" transform="translate(348.4 380.8) scale(0.88 1)">P0.6/AD6</text><text font-size="10" transform="translate(397 375.7) scale(0.88 1)">g</text><text font-size="10" transform="translate(363.8 473.7) scale(0.88 1)">27</text><text font-size="10" text-anchor="end" transform="translate(348.4 478.8) scale(0.88 1)">P2.6/A14</text><text font-size="10" transform="translate(397 473.7) scale(0.88 1)">q7</text><text font-size="10" transform="translate(363.8 571.7) scale(0.88 1)">16</text><text font-size="10" text-anchor="end" transform="translate(348.4 576.8) scale(0.88 1)">P3.6/WR</text><text font-size="10" transform="translate(363.8 386.7) scale(0.88 1)">32</text><text font-size="10" text-anchor="end" transform="translate(348.4 391.8) scale(0.88 1)">P0.7/AD7</text><text font-size="10" transform="translate(397 386.7) scale(0.88 1)">dp</text><text font-size="10" transform="translate(363.8 484.7) scale(0.88 1)">28</text><text font-size="10" text-anchor="end" transform="translate(348.4 489.8) scale(0.88 1)">P2.7/A15</text><text font-size="10" transform="translate(397 484.7) scale(0.88 1)">q8</text><text font-size="10" transform="translate(363.8 582.7) scale(0.88 1)">17</text><text font-size="10" text-anchor="end" transform="translate(348.4 587.8) scale(0.88 1)">P3.7/RD</text><text font-size="14.2" transform="translate(58.6 265.7) scale(0.85 1)">C1</text><text font-size="10" transform="translate(58 300.3) scale(0.88 1)">22pF</text><text font-size="14.2" transform="translate(58.6 330.7) scale(0.85 1)">C2</text><text font-size="10" transform="translate(58 365.3) scale(0.88 1)">22pF</text><text font-size="14.2" transform="translate(135.5 313.8) scale(0.85 1)">X1</text><text font-size="10" transform="translate(136.2 326.3) scale(0.88 1)">12M</text><text font-size="14.2" transform="translate(92 379.6) scale(0.85 1)">R1</text><text font-size="10" transform="translate(92 402) scale(0.88 1)">10k</text><text font-size="14.2" transform="translate(70 418) scale(0.85 1)">C3</text><text font-size="10" transform="translate(70 452) scale(0.88 1)">10uF</text><text font-size="14.2" transform="translate(511.7 313.8) scale(0.85 1)">Q1</text><text font-size="10" transform="translate(501 337.2) scale(0.88 1)">NPN</text><text font-size="10" transform="translate(502.9 280.8) rotate(-90) scale(0.88 1)">1</text><text font-size="14.2" transform="translate(500.7 475.7) scale(0.85 1)">Q5</text><text font-size="10" transform="translate(501.2 488.9) scale(0.88 1)">NPN</text><text font-size="10" transform="translate(502.9 431.8) rotate(-90) scale(0.88 1)">5</text><text font-size="10" transform="translate(458.7 377) rotate(-90) scale(0.88 1)">q1</text><text font-size="10" transform="translate(458.7 409.5) rotate(-90) scale(0.88 1)">q5</text><text font-size="14.2" transform="translate(587.7 313.8) scale(0.85 1)">Q2</text><text font-size="10" transform="translate(577 337.2) scale(0.88 1)">NPN</text><text font-size="10" transform="translate(578.9 280.8) rotate(-90) scale(0.88 1)">2</text><text font-size="14.2" transform="translate(576.7 475.7) scale(0.85 1)">Q6</text><text font-size="10" transform="translate(577.2 488.9) scale(0.88 1)">NPN</text><text font-size="10" transform="translate(578.9 431.8) rotate(-90) scale(0.88 1)">6</text><text font-size="10" transform="translate(524.7 377) rotate(-90) scale(0.88 1)">q2</text><text font-size="10" transform="translate(524.7 409.5) rotate(-90) scale(0.88 1)">q6</text><text font-size="14.2" transform="translate(663.7 313.8) scale(0.85 1)">Q3</text><text font-size="10" transform="translate(653 337.2) scale(0.88 1)">NPN</text><text font-size="10" transform="translate(654.9 280.8) rotate(-90) scale(0.88 1)">3</text><text font-size="14.2" transform="translate(652.7 475.7) scale(0.85 1)">Q7</text><text font-size="10" transform="translate(653.2 488.9) scale(0.88 1)">NPN</text><text font-size="10" transform="translate(654.9 431.8) rotate(-90) scale(0.88 1)">7</text><text font-size="10" transform="translate(600.7 377) rotate(-90) scale(0.88 1)">q3</text><text font-size="10" transform="translate(600.7 409.5) rotate(-90) scale(0.88 1)">q7</text><text font-size="14.2" transform="translate(740.7 313.8) scale(0.85 1)">Q4</text><text font-size="10" transform="translate(730 337.2) scale(0.88 1)">NPN</text><text font-size="10" transform="translate(731.9 280.8) rotate(-90) scale(0.88 1)">4</text><text font-size="14.2" transform="translate(729.7 475.7) scale(0.85 1)">Q8</text><text font-size="10" transform="translate(730.2 488.9) scale(0.88 1)">NPN</text><text font-size="10" transform="translate(731.9 431.8) rotate(-90) scale(0.88 1)">8</text><text font-size="10" transform="translate(676.7 377) rotate(-90) scale(0.88 1)">q4</text><text font-size="10" transform="translate(676.7 409.5) rotate(-90) scale(0.88 1)">q8</text></g>
</svg>
</div>
</body></html>
